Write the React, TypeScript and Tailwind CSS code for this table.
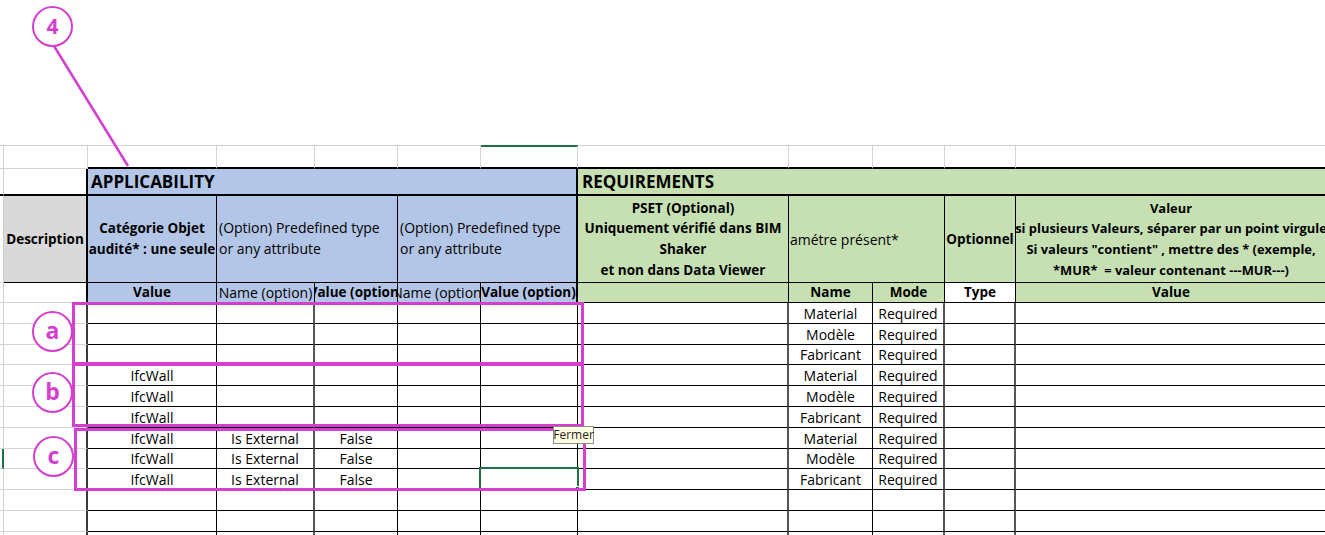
import React from "react";

type CellProps = { cls?: string; children?: React.ReactNode };

function Cell({ cls = "", children }: CellProps) {
  return (
    <div className={`box-border overflow-hidden flex items-center whitespace-nowrap ${cls}`}>
      {children}
    </div>
  );
}

const rows: [string, string, string, string][] = [
  ["", "", "", "Material"],
  ["", "", "", "Modèle"],
  ["", "", "", "Fabricant"],
  ["IfcWall", "", "", "Material"],
  ["IfcWall", "", "", "Modèle"],
  ["IfcWall", "", "", "Fabricant"],
  ["IfcWall", "Is External", "False", "Material"],
  ["IfcWall", "Is External", "False", "Modèle"],
  ["IfcWall", "Is External", "False", "Fabricant"],
  ["", "", "", ""],
  ["", "", "", ""],
  ["", "", "", ""],
];

const EDGE = "border-r border-b border-[#cfcfcf] bg-white";
const GRIDA = "border-r-2 border-r-[#3a3a3a] border-b border-b-[#d4d4d4] bg-white";
const REG = "text-[14px] text-black";

export default function App() {
  return (
    <div className="relative w-[1325px] h-[535px] overflow-hidden bg-white font-['Open_Sans',sans-serif] text-[13.5px] text-black">
      <div className="h-[145px]" />
      <div className="grid grid-cols-[4px_84px_129px_98px_83px_83px_97px_211px_84px_72px_71px_310px] grid-rows-[23px_27px_87px_20px_21px_21px_20px_21px_21px_21px_21px_20px_21px_21px_21px_21px] border-t border-[#d0d0d0]">
        {/* Row 1 */}
        <Cell cls={EDGE} />
        <Cell cls="border-r border-b border-[#d4d4d4]" />
        <Cell cls="border-r border-r-[#d4d4d4] border-b-2 border-b-black" />
        <Cell cls="border-r border-r-[#d4d4d4] border-b-2 border-b-black" />
        <Cell cls="border-r border-r-[#d4d4d4] border-b-2 border-b-black" />
        <Cell cls="border-r border-r-[#d4d4d4] border-b-2 border-b-black" />
        <Cell cls="border-r border-r-[#d4d4d4] border-b-2 border-b-black border-t-2 border-t-[#217346] -mt-[1px]" />
        <Cell cls="border-r border-r-[#d4d4d4] border-b-2 border-b-black" />
        <Cell cls="border-r border-r-[#d4d4d4] border-b-2 border-b-black" />
        <Cell cls="border-r border-r-[#d4d4d4] border-b-2 border-b-black" />
        <Cell cls="border-r border-r-[#d4d4d4] border-b-2 border-b-black" />
        <Cell cls="border-b-2 border-b-black" />

        {/* Row 2 */}
        <Cell cls="border-r border-r-[#cfcfcf] border-b-2 border-b-black" />
        <Cell cls="border-r-2 border-r-black border-b-2 border-b-black bg-white" />
        <Cell cls="col-span-5 bg-[#b4c6e7] border-r-2 border-r-black border-b-2 border-b-black pl-[3px] font-bold text-[17px]">
          APPLICABILITY
        </Cell>
        <Cell cls="col-span-5 bg-[#c6e0b4] border-b-2 border-b-black pl-[4px] font-bold text-[17px]">
          REQUIREMENTS
        </Cell>

        {/* Row 3 */}
        <Cell cls={EDGE} />
        <Cell cls="bg-[#d9d9d9] border-r-2 border-r-black border-b border-b-black justify-center font-bold">
          Description
        </Cell>
        <Cell cls="bg-[#b4c6e7] border-r border-r-black border-b border-b-black justify-center font-bold">
          <div className="text-center leading-[20.7px]">
            Catégorie Objet
            <br />
            audité* : une seule
          </div>
        </Cell>
        <Cell cls={`col-span-2 bg-[#b4c6e7] border-r border-r-black border-b border-b-black pl-[2px] ${REG}`}>
          <div className="leading-[20.7px]">
            (Option) Predefined type
            <br />
            or any attribute
          </div>
        </Cell>
        <Cell cls={`col-span-2 bg-[#b4c6e7] border-r-2 border-r-black border-b border-b-black pl-[2px] ${REG}`}>
          <div className="leading-[20.7px]">
            (Option) Predefined type
            <br />
            or any attribute
          </div>
        </Cell>
        <Cell cls="bg-[#c6e0b4] border-r border-r-black border-b border-b-black justify-center font-bold">
          <div className="text-center leading-[20.7px]">
            PSET (Optional)
            <br />
            Uniquement vérifié dans BIM
            <br />
            Shaker
            <br />
            et non dans Data Viewer
          </div>
        </Cell>
        <Cell cls={`col-span-2 bg-[#c6e0b4] border-r border-r-black border-b border-b-black pl-[1px] ${REG}`}>
          amétre présent*
        </Cell>
        <Cell cls="bg-[#c6e0b4] border-r border-r-black border-b border-b-black justify-center font-bold">
          Optionnel
        </Cell>
        <Cell cls="bg-[#c6e0b4] border-b border-b-black justify-center font-bold text-[12.9px]">
          <div className="text-center leading-[20.7px]">
            Valeur
            <br />
            si plusieurs Valeurs, séparer par un point virgule
            <br />
            Si valeurs "contient" , mettre des * (exemple,
            <br />
            *MUR*&nbsp; = valeur contenant ---MUR---)
          </div>
        </Cell>

        {/* Row 4 */}
        <Cell cls={EDGE} />
        <Cell cls="bg-white border-r-2 border-r-black border-b border-b-[#d4d4d4]" />
        <Cell cls="bg-[#b4c6e7] border-r border-r-black border-b border-b-black justify-center font-bold">Value</Cell>
        <Cell cls={`bg-[#b4c6e7] border-r border-r-black border-b border-b-black justify-center ${REG}`}>Name (option)</Cell>
        <Cell cls="bg-[#b4c6e7] border-r border-r-black border-b border-b-black justify-center font-bold">Value (option)</Cell>
        <Cell cls={`bg-[#b4c6e7] border-r border-r-black border-b border-b-black justify-center ${REG}`}>Name (option)</Cell>
        <Cell cls="bg-[#b4c6e7] border-r-2 border-r-black border-b border-b-black justify-center font-bold">Value (option)</Cell>
        <Cell cls="bg-[#c6e0b4] border-r border-r-black border-b border-b-black" />
        <Cell cls="bg-[#c6e0b4] border-r border-r-black border-b border-b-black justify-center font-bold">Name</Cell>
        <Cell cls="bg-[#c6e0b4] border-r border-r-black border-b border-b-black justify-center font-bold">Mode</Cell>
        <Cell cls="bg-white border-r border-r-black border-b border-b-black justify-center font-bold">Type</Cell>
        <Cell cls="bg-[#c6e0b4] border-b border-b-black justify-center font-bold">Value</Cell>

        {/* Data rows */}
        {rows.map((r, i) => (
          <React.Fragment key={i}>
            <Cell
              cls={
                i === 7
                  ? "border-r-2 border-r-[#217346] border-b border-b-[#cfcfcf] bg-white"
                  : EDGE
              }
            />
            <Cell cls={GRIDA} />
            <Cell cls={`border-r border-r-black border-b border-b-black justify-center ${REG}`}>{r[0]}</Cell>
            <Cell cls={`border-r-2 border-r-[#555] border-b border-b-black justify-center ${REG}`}>{r[1]}</Cell>
            <Cell cls={`border-r border-r-black border-b border-b-black justify-center ${REG}`}>{r[2]}</Cell>
            <Cell cls="border-r border-r-black border-b border-b-black" />
            <Cell cls="border-r border-r-black border-b border-b-black" />
            <Cell cls="border-r-2 border-r-[#555] border-b border-b-black" />
            <Cell cls={`border-r border-r-black border-b border-b-black justify-center ${REG}`}>{r[3]}</Cell>
            <Cell cls={`border-r-2 border-r-[#555] border-b border-b-black justify-center ${REG}`}>
              {r[3] ? "Required" : ""}
            </Cell>
            <Cell cls="border-r-2 border-r-[#555] border-b border-b-black" />
            <Cell cls="border-b border-b-black" />
          </React.Fragment>
        ))}
      </div>

      {/* Selected cell */}
      <div className="absolute left-[479px] top-[467px] w-[100px] h-[23px] border-2 border-[#217346]" />
      <div className="absolute left-[575px] top-[486px] w-[5px] h-[5px] bg-[#217346] border border-white" />

      {/* Magenta annotation boxes */}
      <div className="absolute left-[72px] top-[302px] w-[512px] h-[63px] border-[3px] border-[#d43fcf]" />
      <div className="absolute left-[72px] top-[363px] w-[512px] h-[64px] border-[3px] border-[#d43fcf]" />
      <div className="absolute left-[74px] top-[428px] w-[512px] h-[63px] border-[3px] border-[#d43fcf]" />

      {/* Circles */}
      <div className="absolute left-[32px] top-[6px] w-[41px] h-[41px] rounded-full border-[2.5px] border-[#d43fcf] bg-white flex items-center justify-center text-[#d43fcf] font-bold text-[21px] leading-none">
        4
      </div>
      <div className="absolute left-[32px] top-[311px] w-[41px] h-[41px] rounded-full border-[2.5px] border-[#d43fcf] bg-white flex items-center justify-center text-[#d43fcf] font-bold text-[23px] leading-none pb-[3px]">
        a
      </div>
      <div className="absolute left-[32px] top-[372px] w-[41px] h-[41px] rounded-full border-[2.5px] border-[#d43fcf] bg-white flex items-center justify-center text-[#d43fcf] font-bold text-[23px] leading-none pb-[2px]">
        b
      </div>
      <div className="absolute left-[33px] top-[436px] w-[41px] h-[41px] rounded-full border-[2.5px] border-[#d43fcf] bg-white flex items-center justify-center text-[#d43fcf] font-bold text-[23px] leading-none pb-[3px]">
        c
      </div>

      {/* Leader line */}
      <svg className="absolute left-0 top-0" width="200" height="200">
        <line x1="54" y1="46" x2="128" y2="166" stroke="#d43fcf" strokeWidth="2.5" />
      </svg>

      {/* Tooltip */}
      <div className="absolute left-[553px] top-[426px] w-[41px] h-[18px] bg-[#ffffe1] border border-[#8a8a8a] flex items-center justify-center text-[12px] text-[#222] leading-none">
        Fermer
      </div>
    </div>
  );
}
